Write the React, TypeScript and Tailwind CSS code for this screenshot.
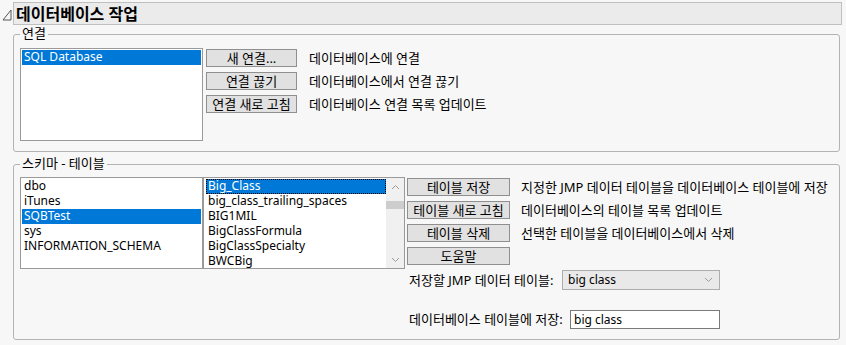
import React from 'react'

const font = { fontFamily: '"Noto Sans", "Noto Sans CJK KR", sans-serif' }

function Btn({ label, w }: { label: string; w: string }) {
  return (
    <div className={`${w} h-[18px] shrink-0 border border-[#8f8f8f] bg-[#e1e1e1] flex items-center justify-center text-[13px] leading-none text-black`}>
      {label}
    </div>
  )
}

function Chevron({ up }: { up?: boolean }) {
  return (
    <svg width="9" height="6" viewBox="0 0 9 6" className="block">
      <path d={up ? 'M1 5 L4.5 1.5 L8 5' : 'M1 1 L4.5 4.5 L8 1'} fill="none" stroke="#9a9a9a" strokeWidth="1" />
    </svg>
  )
}

function Group({ title, className, children }: { title: string; className: string; children: React.ReactNode }) {
  return (
    <div className={`relative ml-[13px] w-[827px] border border-[#b3b3b3] rounded-[3px] ${className}`}>
      <span className="absolute left-[6px] -top-[10px] bg-[#f7f7f7] px-[2px] text-[13px] leading-[17px] text-black">{title}</span>
      {children}
    </div>
  )
}

const schemas = ['dbo', 'iTunes', 'SQBTest', 'sys', 'INFORMATION_SCHEMA']
const tables = ['Big_Class', 'big_class_trailing_spaces', 'BIG1MIL', 'BigClassFormula', 'BigClassSpecialty', 'BWCBig']

const connRows = [
  ['새 연결...', '데이터베이스에 연결'],
  ['연결 끊기', '데이터베이스에서 연결 끊기'],
  ['연결 새로 고침', '데이터베이스 연결 목록 업데이트'],
]

const tableRows = [
  ['테이블 저장', '지정한 JMP 데이터 테이블을 데이터베이스 테이블에 저장'],
  ['테이블 새로 고침', '데이터베이스의 테이블 목록 업데이트'],
  ['테이블 삭제', '선택한 테이블을 데이터베이스에서 삭제'],
  ['도움말', ''],
]

export default function App() {
  return (
    <div className="w-[846px] h-[345px] bg-[#f7f7f7] overflow-hidden text-black" style={font}>
      {/* header */}
      <div className="flex items-start pt-[2px]">
        <div className="w-[13px] h-[23px] flex items-center justify-center pt-[3px]">
          <svg width="10" height="12" viewBox="0 0 10 12">
            <path d="M1 11 L9 1 L9 11 Z" fill="none" stroke="#555" strokeWidth="1" />
          </svg>
        </div>
        <div className="w-[829px] h-[23px] bg-[#ebebeb] border border-[#bfbfbf] flex items-center pl-[2px] text-[16px] font-bold leading-none">
          데이터베이스 작업
        </div>
      </div>

      {/* connection */}
      <Group title="연결" className="mt-[9px] h-[118px]">
        <div className="flex items-start pl-[6px] pt-[13px]">
          <div className="w-[183px] h-[93px] border border-[#9a9a9a] bg-white p-px">
            <div className="h-[15px] bg-[#0078d7] text-white text-[12px] leading-[14px] pl-[2px]">SQL Database</div>
          </div>
          <div className="flex flex-col gap-[5px] ml-[3px] pt-px">
            {connRows.map(([b, d]) => (
              <div key={b} className="flex items-center">
                <Btn label={b} w="w-[91px]" />
                <span className="ml-[12px] text-[13px] leading-none">{d}</span>
              </div>
            ))}
          </div>
        </div>
      </Group>

      {/* schema - table */}
      <Group title="스키마 - 테이블" className="mt-[12px] h-[176px]">
        <div className="flex items-start pl-[6px] pt-[12px]">
          <div className="w-[183px] h-[92px] border border-[#9a9a9a] bg-white p-px">
            {schemas.map((s) => (
              <div
                key={s}
                className={`h-[15px] text-[12px] leading-[14px] pl-[2px] ${s === 'SQBTest' ? 'bg-[#0078d7] text-white' : ''}`}
              >
                {s}
              </div>
            ))}
          </div>
          <div className="w-[202px] h-[92px] border border-[#9a9a9a] bg-white flex overflow-hidden">
            <div className="flex-1 pl-[2px] pt-px overflow-hidden">
              {tables.map((t) => (
                <div
                  key={t}
                  className={`h-[15px] text-[12px] leading-[12px] pl-px whitespace-nowrap ${t === 'Big_Class' ? 'bg-[#0078d7] text-white border border-dotted border-black' : 'border border-transparent'}`}
                >
                  {t}
                </div>
              ))}
            </div>
            <div className="w-[18px] bg-[#f0f0f0] flex flex-col items-center">
              <div className="h-[17px] flex items-center justify-center">
                <Chevron up />
              </div>
              <div className="w-full h-[8px] bg-[#cdcdcd] mt-[6px]" />
              <div className="flex-1" />
              <div className="h-[17px] flex items-center justify-center">
                <Chevron />
              </div>
            </div>
          </div>

          <div className="flex flex-col ml-[2px] pt-px">
            <div className="flex flex-col gap-[5px]">
              {tableRows.map(([b, d]) => (
                <div key={b} className="flex items-center">
                  <Btn label={b} w="w-[103px]" />
                  {d && <span className="ml-[11px] text-[13px] leading-none whitespace-nowrap">{d}</span>}
                </div>
              ))}
            </div>
            <div className="flex items-center mt-[5px] pl-[2px]">
              <span className="w-[153px] text-[13px] leading-none whitespace-nowrap">저장할 JMP 데이터 테이블:</span>
              <div className="w-[158px] h-[20px] bg-[#e9e9e9] border border-[#adadad] flex items-center justify-between pl-[5px] pr-[6px]">
                <span className="text-[12px] leading-none">big class</span>
                <Chevron />
              </div>
            </div>
            <div className="flex items-center mt-[20px] pl-[2px]">
              <span className="w-[161px] text-[13px] leading-none whitespace-nowrap">데이터베이스 테이블에 저장:</span>
              <div className="w-[150px] h-[19px] bg-white border border-[#7a7a7a] flex items-center pl-[3px]">
                <span className="text-[12px] leading-none">big class</span>
              </div>
            </div>
          </div>
        </div>
      </Group>
    </div>
  )
}
